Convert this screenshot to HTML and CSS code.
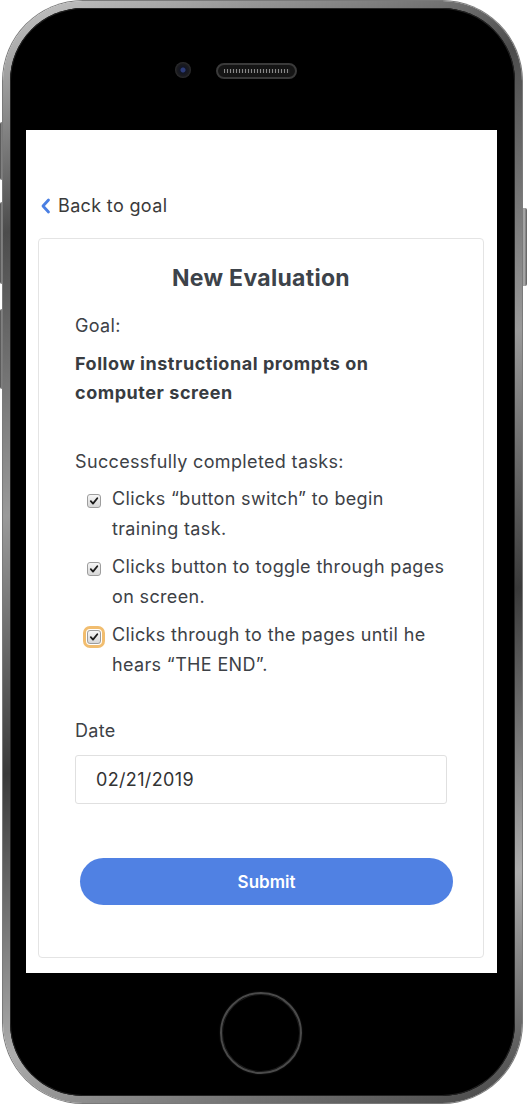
FILE: index.html
```html
<!DOCTYPE html>
<html>
<head>
<meta charset="utf-8">
<link rel="stylesheet" href="styles.css">
</head>
<body>
<div class="device">
  <span class="hw hw-mute"></span>
  <span class="hw hw-vol-up"></span>
  <span class="hw hw-vol-down"></span>
  <span class="hw hw-power"></span>
  <div class="phone">
    <div class="top">
      <span class="camera"></span>
      <span class="speaker"></span>
    </div>
    <div class="screen">
      <a class="back">
        <svg class="chev" width="11" height="16" viewBox="0 0 11 16"><path d="M8.5 2 L3 8 L8.5 14" fill="none" stroke="#4a7fe3" stroke-width="2.8" stroke-linecap="round" stroke-linejoin="round"/></svg>
        <span>Back to goal</span>
      </a>
      <div class="card">
        <h1 class="title">New Evaluation</h1>
        <p class="label">Goal:</p>
        <p class="goal">Follow instructional prompts on computer screen</p>
        <p class="label tasks-label">Successfully completed tasks:</p>
        <ul class="tasks">
          <li class="task">
            <span class="cb"><svg width="10" height="10" viewBox="0 0 10 10"><path d="M1.8 5.2 L4 7.6 L8.3 2.2" fill="none" stroke="#1c1c1c" stroke-width="1.8" stroke-linecap="round" stroke-linejoin="round"/></svg></span>
            <span class="task-text">Clicks “button switch” to begin training task.</span>
          </li>
          <li class="task">
            <span class="cb"><svg width="10" height="10" viewBox="0 0 10 10"><path d="M1.8 5.2 L4 7.6 L8.3 2.2" fill="none" stroke="#1c1c1c" stroke-width="1.8" stroke-linecap="round" stroke-linejoin="round"/></svg></span>
            <span class="task-text">Clicks button to toggle through pages on screen.</span>
          </li>
          <li class="task">
            <span class="cb cb-focus"><svg width="10" height="10" viewBox="0 0 10 10"><path d="M1.8 5.2 L4 7.6 L8.3 2.2" fill="none" stroke="#1c1c1c" stroke-width="1.8" stroke-linecap="round" stroke-linejoin="round"/></svg></span>
            <span class="task-text">Clicks through to the pages until he hears “THE END”.</span>
          </li>
        </ul>
        <p class="label date-label">Date</p>
        <div class="input">02/21/2019</div>
        <button class="submit">Submit</button>
      </div>
    </div>
    <div class="bottom">
      <span class="home"></span>
    </div>
  </div>
</div>
</body>
</html>
```

FILE: styles.css
```css
html, body {
  margin: 0;
  padding: 0;
  background: #ffffff;
}

.device {
  position: relative;
  width: 528px;
  height: 1104px;
  padding: 1px 0 0 3px;
  box-sizing: border-box;
}

.hw {
  position: absolute;
  background: linear-gradient(90deg, #4a4a4a, #b5b5b5 50%, #5a5a5a);
  border-radius: 2px;
}
.hw-mute { left: 0; top: 122px; width: 6px; height: 58px; }
.hw-vol-up { left: 0; top: 202px; width: 6px; height: 82px; }
.hw-vol-down { left: 0; top: 309px; width: 6px; height: 80px; }
.hw-power { right: 1px; top: 208px; width: 6px; height: 78px; }

.phone {
  position: relative;
  width: 519px;
  height: 1102px;
  box-sizing: border-box;
  border: 7px solid transparent;
  border-radius: 80px;
  background:
    linear-gradient(#000, #000) padding-box,
    linear-gradient(160deg, #c8c8c8 0%, #4c4c4c 18%, #9a9a9a 40%, #3a3a3a 60%, #adadad 82%, #454545 100%) border-box;
  box-shadow: 0 0 0 1px #7a7a7a, inset 0 0 0 1px #222;
  display: flex;
  flex-direction: column;
}

.top {
  height: 122px;
  display: flex;
  align-items: flex-start;
  padding: 54px 0 0 165px;
  box-sizing: border-box;
  gap: 25px;
}

.camera {
  width: 16px;
  height: 16px;
  border-radius: 50%;
  background: radial-gradient(circle at 50% 50%, #2c3b78 0 2px, #121523 3px, #1b1b1e 6px, #2e2e30 8px);
}

.speaker {
  width: 81px;
  height: 16px;
  margin-top: 1px;
  border-radius: 8px;
  box-sizing: border-box;
  border: 2px solid #3a3a3a;
  background:
    repeating-linear-gradient(90deg, #8a8a8a 0 1px, #1c1c1c 1px 3px) center / 66px 4px no-repeat,
    #151515;
}

.screen {
  width: 471px;
  height: 843px;
  margin-left: 16px;
  background: #fff;
  box-sizing: border-box;
  padding: 60px 13px 0 12px;
  font-family: Inter, "Liberation Sans", Arial, sans-serif;
  color: #3d4146;
  letter-spacing: 0.35px;
  display: flex;
  flex-direction: column;
}

.back {
  display: flex;
  align-items: center;
  height: 30px;
  padding-left: 2px;
  gap: 7px;
  font-size: 18px;
  color: #3a3a3a;
  text-decoration: none;
}
.chev { display: block; margin-top: 1px; }

.card {
  margin-top: 18px;
  border: 1px solid #e4e4e4;
  border-radius: 4px;
  padding: 24px 36px 52px 36px;
  display: flex;
  flex-direction: column;
}

.title {
  margin: 0;
  text-align: center;
  font-size: 23px;
  line-height: 30px;
  font-weight: 700;
  letter-spacing: 0.3px;
  color: #3d434a;
}

.label {
  margin: 18px 0 0;
  font-size: 18px;
  line-height: 30px;
}

.goal {
  margin: 8px 0 0;
  font-size: 18px;
  font-weight: 700;
  line-height: 29px;
  letter-spacing: 0.55px;
  color: #383c41;
}

.tasks-label { margin-top: 40px; }

.tasks {
  list-style: none;
  margin: 7px -4px 0 0;
  padding: 0 0 0 12px;
  display: flex;
  flex-direction: column;
  gap: 8px;
}

.task {
  display: flex;
  align-items: flex-start;
  gap: 11px;
  font-size: 18px;
  line-height: 30px;
}

.cb {
  flex: none;
  width: 14px;
  height: 14px;
  margin-top: 10px;
  box-sizing: border-box;
  border: 1px solid #9d9d9d;
  border-radius: 3px;
  background: linear-gradient(#f6f6f6, #d7d7d7);
  display: flex;
  align-items: center;
  justify-content: center;
}
.cb svg { display: block; }

.cb-focus {
  box-shadow: 0 0 0 1px #fff, 0 0 0 4px #f1bd6f;
  border-radius: 3px;
}

.date-label { margin-top: 36px; }

.input {
  margin-top: 9px;
  height: 49px;
  box-sizing: border-box;
  border: 1px solid #e0e0e0;
  border-radius: 3px;
  padding-left: 20px;
  display: flex;
  align-items: center;
  font-size: 18px;
  color: #333;
}

.submit {
  margin: 54px 0 0 5px;
  width: 373px;
  height: 47px;
  border: none;
  border-radius: 24px;
  background: #5081e3;
  color: #fff;
  font-family: Inter, "Liberation Sans", Arial, sans-serif;
  font-size: 17px;
  font-weight: 600;
  padding: 0;
}

.bottom {
  flex: 1;
  display: flex;
  justify-content: flex-start;
  padding: 19px 0 0 210px;
  box-sizing: border-box;
}

.home {
  width: 82px;
  height: 82px;
  box-sizing: border-box;
  border-radius: 50%;
  border: 2px solid #4a4a4a;
  box-shadow: inset 0 0 0 1px #1a1a1a, 0 0 2px #222;
}
```
